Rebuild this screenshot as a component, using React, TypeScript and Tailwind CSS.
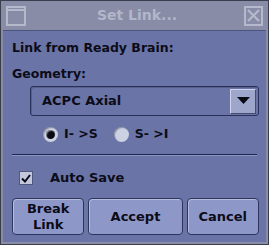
import { ChevronDown } from 'lucide-react'

function Radio({ checked, label }: { checked?: boolean; label: string }) {
  return (
    <div className="flex items-center gap-[6px]">
      <span className="w-[15px] h-[15px] rounded-full bg-[#cdd1e4] flex items-center justify-center shadow-[inset_1px_1px_1px_rgba(0,0,0,0.3)]">
        {checked && <span className="w-[9px] h-[9px] rounded-full bg-[#0a0a14] shadow-[inset_1px_1px_1px_rgba(255,255,255,0.5)]" />}
      </span>
      <span>{label}</span>
    </div>
  )
}

function Button({ children, className }: { children: React.ReactNode; className?: string }) {
  return (
    <button className={`h-[37px] rounded-[4px] bg-[#8e98c8] border border-[#2e355a] shadow-[inset_1px_1px_0_#b4bce0] leading-[16px] text-[13px] text-[#0c0c18] font-bold ${className ?? ''}`}>
      {children}
    </button>
  )
}

export default function App() {
  return (
    <div
      className="w-[269px] h-[245px] bg-[#898ca6] border border-[#3a3d4c] flex flex-col text-[12.5px] text-[#0c0c18]"
      style={{ fontFamily: '"DejaVu Sans", sans-serif' }}
    >
      <div className="h-[29px] flex items-center justify-between px-[5px] shrink-0">
        <span className="w-[20px] h-[20px] border-2 border-[#b6b9cc] flex flex-col">
          <span className="h-[3px] border-b-2 border-[#b6b9cc]" />
        </span>
        <span className="font-bold text-[14px] text-[#b3b6ca] pl-[4px]">Set Link...</span>
        <span className="w-[19px] h-[20px] border-2 border-[#b6b9cc] flex items-center justify-center">
          <svg width="13" height="13" viewBox="0 0 13 13" stroke="#b6b9cc" strokeWidth="2.2">
            <path d="M1 1 L12 12 M12 1 L1 12" />
          </svg>
        </span>
      </div>
      <div className="flex-1 mx-[2px] mb-[2px] bg-[#6a74a6] border-t border-[#4c557e] flex flex-col px-[5px] font-bold">
        <div className="mt-[8px] h-[18px] flex items-center px-[4px]">Link from Ready Brain:</div>
        <div className="mt-[8px] h-[18px] flex items-center px-[4px]">Geometry:</div>
        <div className="mt-[3px] ml-[22px] mr-[2px] h-[30px] flex items-center border border-[#2a3158] rounded-[3px] shadow-[inset_1px_1px_0_#58608e] pl-[11px] pr-[2px]">
          <span className="flex-1 text-[13px]">ACPC Axial</span>
          <span className="w-[26px] h-[25px] bg-[#9ea6cc] border border-[#d0d4ea] border-r-[#444c74] border-b-[#444c74] flex items-center justify-center">
            <svg width="13" height="8" viewBox="0 0 13 8"><path d="M0 0 H13 L6.5 7 Z" fill="#0a0a14" /></svg>
          </span>
        </div>
        <div className="mt-[10px] h-[16px] flex items-center gap-[16px] pl-[35px]">
          <Radio checked label="I- >S" />
          <Radio label="S- >I" />
        </div>
        <div className="mt-[12px] mx-[4px] border-t border-[#1c2650] border-b border-b-[#8e96c4]" />
        <div className="mt-[14px] h-[16px] flex items-center pl-[11px]">
          <span className="w-[14px] h-[14px] bg-[#c4c8dc] border border-[#50587e] flex items-center justify-center">
            <svg width="10" height="9" viewBox="0 0 10 9" fill="none" stroke="#0a0a14" strokeWidth="2">
              <path d="M1 4.5 L4 7.5 L9 1" />
            </svg>
          </span>
          <span className="ml-[17px] text-[13px]">Auto Save</span>
        </div>
        <div className="mt-[12px] flex gap-[4px] pl-[4px] pr-[2px]">
          <Button className="w-[73px]">Break<br />Link</Button>
          <Button className="w-[95px]">Accept</Button>
          <Button className="w-[73px]">Cancel</Button>
        </div>
      </div>
    </div>
  )
}
